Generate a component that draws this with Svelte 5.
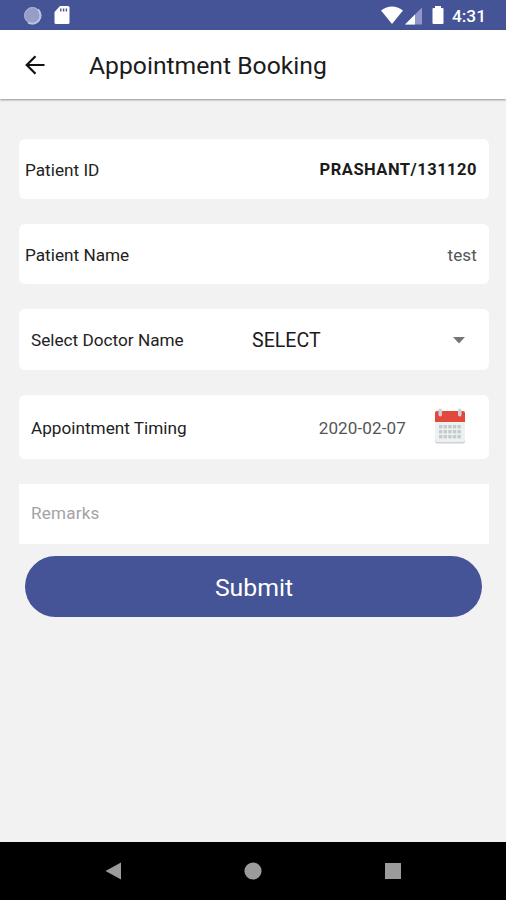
<script>
  let patient = { id: "PRASHANT/131120", name: "test" };

  let doctors = ["SELECT"];
  let doctor = doctors[0];

  let date = "2020-02-07";
  let remarks = "";

  const calendarRows = [17, 22, 27];
  const calendarCols = [5, 9.6, 14.2, 18.8, 23.4];

  const submit = e => e.preventDefault();
</script>

<style>
  :global(body) {
    background-color: #f2f2f2;
  }
  .screen {
    display: flex;
    flex-direction: column;
    height: 900px;
    background-color: #f2f2f2;
    font-family: Roboto, "Liberation Sans", sans-serif;
    color: #222;
  }
  svg {
    display: block;
    flex: none;
  }
  .status-bar {
    display: flex;
    align-items: center;
    justify-content: space-between;
    height: 30px;
    padding: 0 20px 0 23px;
    background-color: #455397;
    color: #fff;
  }
  .status-group {
    display: flex;
    align-items: center;
  }
  .time {
    margin: 2px 0 0 8px;
    font-size: 17.3px;
    font-weight: 500;
    line-height: 20px;
  }
  .app-bar {
    display: flex;
    align-items: center;
    height: 69px;
    padding-left: 24px;
    background-color: #fff;
    box-shadow: 0 1px 2px rgba(0, 0, 0, 0.4);
  }
  .back {
    padding: 0;
    border: 0;
    background: none;
  }
  h1 {
    margin: 2px 0 0 44px;
    color: #1b1b1b;
    font-size: 24.7px;
    font-weight: 400;
    line-height: 30px;
  }
  form {
    flex: 1;
    padding: 40px 17px 0 19px;
  }
  .field {
    display: flex;
    align-items: center;
    box-sizing: border-box;
    height: 60px;
    margin-bottom: 25px;
    padding: 2px 12px 0 6px;
    border-radius: 6px;
    background-color: #fff;
    font-size: 17.2px;
    line-height: 20px;
  }
  .field.indent {
    padding-left: 12px;
  }
  .field.doctor {
    height: 61px;
    padding-top: 0;
  }
  .field.timing {
    height: 64px;
    padding-top: 1px;
  }
  .value {
    margin-left: auto;
    color: #555;
    font-size: 17.1px;
    letter-spacing: 0.1px;
  }
  .value.strong {
    color: #1b1b1b;
    font-size: 16.5px;
    font-weight: 700;
    letter-spacing: 0.5px;
  }
  .picker {
    display: flex;
    align-items: center;
    justify-content: space-between;
    width: 213px;
    margin-left: auto;
    margin-right: 12px;
    padding: 1px 0 0;
    border: 0;
    background: none;
    color: #1b1b1b;
    font-family: inherit;
    font-size: 19.6px;
  }
  .calendar {
    margin: 0 11px 3px 28px;
  }
  .remarks {
    display: block;
    box-sizing: border-box;
    width: 100%;
    height: 60px;
    padding: 0 12px 2px;
    border: 0;
    border-radius: 0;
    outline: 0;
    background-color: #fff;
    font-family: inherit;
    font-size: 17.1px;
    letter-spacing: 0.2px;
  }
  .remarks::placeholder {
    color: #a3a3a3;
    opacity: 1;
  }
  .submit {
    display: block;
    width: 457px;
    height: 61px;
    margin: 12px 0 0 6px;
    padding: 2px 0 0 1px;
    border: 0;
    border-radius: 31px;
    background-color: #455397;
    color: #fff;
    font-family: inherit;
    font-size: 24.8px;
  }
  .nav-bar {
    display: flex;
    align-items: center;
    justify-content: space-between;
    box-sizing: border-box;
    height: 58px;
    padding: 0 104px;
    background-color: #000;
  }
</style>

<div class="screen">
  <div class="status-bar">
    <div class="status-group">
      <svg width="19" height="19" viewBox="0 0 19 19">
        <circle cx="9.5" cy="9.5" r="8" fill="#959dc9" />
        <path
          d="M15 3.5A8.2 8.2 0 0 1 5 16.4"
          fill="none"
          stroke="#d5daee"
          stroke-width="1.8" />
        <circle cx="9.5" cy="9.5" r="8" fill="none" stroke="#b3badb" />
      </svg>
      <svg width="28" height="20" viewBox="0 0 28 20">
        <path
          d="M18 1h8q1.5 0 1.5 1.5v15q0 1.5-1.5 1.5H14q-1.5 0-1.5-1.5V7z"
          fill="#fff" />
        <path
          d="M18.8 3.5v3M21.6 3.5v3M24.4 3.5v3"
          stroke="#455397"
          stroke-width="1.4" />
      </svg>
    </div>
    <div class="status-group">
      <svg width="22" height="19" viewBox="0 0 22 19">
        <path d="M0 4.5Q11-3.3 22 4.5L11 18z" fill="#fff" />
      </svg>
      <svg width="19" height="19" viewBox="0 0 19 19">
        <path d="M2 18.5 19 1.5v17z" fill="#8f98c6" />
        <path d="M2 18.5 12 8.5v10z" fill="#fff" />
      </svg>
      <svg width="22" height="20" viewBox="0 0 22 20">
        <path
          d="M13 1h6v2h1.5q1 0 1 1v14q0 1-1 1h-9q-1 0-1-1V4q0-1 1-1H13z"
          fill="#fff" />
      </svg>
      <span class="time">4:31</span>
    </div>
  </div>

  <div class="app-bar">
    <button class="back" aria-label="Back">
      <svg width="21" height="20" viewBox="0 0 21 20">
        <path
          d="M20.5 10H3M11.5 1.2 2.7 10l8.8 8.8"
          fill="none"
          stroke="#111"
          stroke-width="2.2" />
      </svg>
    </button>
    <h1>Appointment Booking</h1>
  </div>

  <form on:submit={submit}>
    <!-- Patient -->
    <div class="field">
      <span>Patient ID</span>
      <span class="value strong">{patient.id}</span>
    </div>
    <div class="field">
      <span>Patient Name</span>
      <span class="value">{patient.name}</span>
    </div>
    <!-- / Patient -->
    <!-- Doctor -->
    <div class="field indent doctor">
      <span>Select Doctor Name</span>
      <button type="button" class="picker">
        {doctor}
        <svg width="12" height="7" viewBox="0 0 12 7">
          <path d="M0 0h12L6 6.5z" fill="#757575" />
        </svg>
      </button>
    </div>
    <!-- / Doctor -->
    <!-- Timing -->
    <div class="field indent timing">
      <span>Appointment Timing</span>
      <span class="value">{date}</span>
      <svg class="calendar" width="32" height="36" viewBox="0 0 32 36">
        <rect x="1" y="4" width="30" height="31.5" rx="2" fill="#cbd3d5" />
        <rect x="1" y="4" width="30" height="30" rx="2" fill="#eef1f2" />
        <path d="M1 14V5q0-2 2-2h26q2 0 2 2v9z" fill="#e2483d" />
        {#each calendarRows as y}
          {#each calendarCols as x}
            <rect {x} {y} width="3.4" height="3.4" fill="#c3cbcd" />
          {/each}
        {/each}
        <rect x="4.5" y="0.5" width="3.5" height="8" rx="1.7" fill="#cfd2d3" />
        <rect x="24" y="0.5" width="3.5" height="8" rx="1.7" fill="#cfd2d3" />
      </svg>
    </div>
    <!-- / Timing -->
    <input
      class="remarks"
      name="remarks"
      placeholder="Remarks"
      bind:value={remarks}
      type="text" />
    <button type="submit" class="submit">Submit</button>
  </form>

  <div class="nav-bar">
    <svg width="18" height="18" viewBox="0 0 18 18">
      <path d="M1.5 9 17 0.5v17z" fill="#9b9b9b" />
    </svg>
    <svg width="18" height="18" viewBox="0 0 18 18">
      <circle cx="9" cy="9" r="8.6" fill="#9b9b9b" />
    </svg>
    <svg width="18" height="18" viewBox="0 0 18 18">
      <rect x="1" y="1" width="16" height="16" fill="#9b9b9b" />
    </svg>
  </div>
</div>
